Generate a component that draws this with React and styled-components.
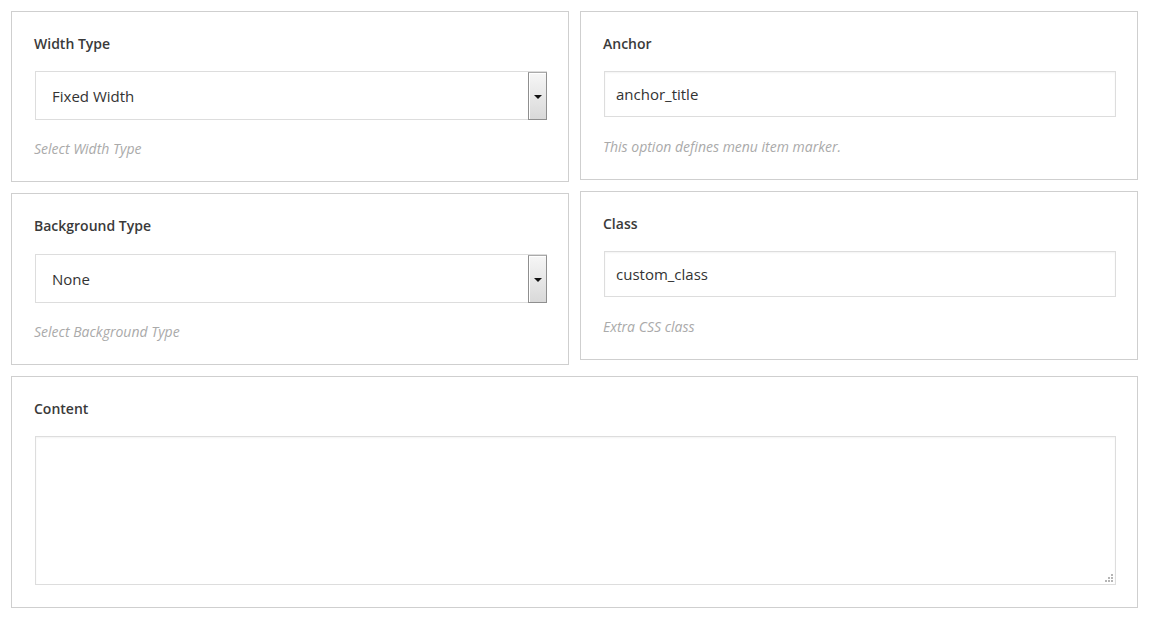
import React from 'react';
import styled, { createGlobalStyle } from 'styled-components';

const GlobalStyle = createGlobalStyle`
  html, body {
    margin: 0;
    padding: 0;
    background: #fff;
    font-family: "Open Sans", "Liberation Sans", sans-serif;
  }
`;

const Page = styled.div`
  padding: 11px 11px 0 11px;
  width: 1127px;
  display: flex;
  flex-direction: column;
  gap: 11px;
`;

const Columns = styled.div`
  display: grid;
  grid-template-columns: 558px 558px;
  gap: 11px;
  align-items: start;
`;

const Column = styled.div`
  display: flex;
  flex-direction: column;
  gap: 11px;
`;

const Box = styled.div`
  border: 1px solid #cfcfcf;
  padding: 22px 21px 22px 23px;
  display: flex;
  flex-direction: column;
`;

const Label = styled.div`
  font-size: 14px;
  line-height: 20px;
  font-weight: 600;
  color: #3a3a3a;
  margin-left: -1px;
  margin-bottom: ${p => p.$space || 17}px;
`;

const Hint = styled.div`
  font-size: 14px;
  line-height: 20px;
  font-style: italic;
  color: #aaa;
  margin-top: ${p => p.$gap}px;
  margin-left: -1px;
`;

const SelectBox = styled.div`
  height: 49px;
  box-sizing: border-box;
  border: 1px solid #ddd;
  display: flex;
  align-items: stretch;
  background: #fff;
`;

const SelectValue = styled.div`
  flex: 1;
  display: flex;
  align-items: center;
  padding-left: 16px;
  font-size: 15px;
  color: #333;
`;

const SelectButton = styled.div`
  width: 19px;
  box-sizing: border-box;
  margin: 0 -1px -1px 0;
  border: 1px solid #8f8f8f;
  border-top-color: #aaa;
  background: linear-gradient(to bottom, #f6f6f6, #d9d9d9);
  box-shadow: inset 1px 1px 0 #fff;
  display: flex;
  align-items: center;
  justify-content: center;

  &::after {
    content: '';
    border-left: 4px solid transparent;
    border-right: 4px solid transparent;
    border-top: 4px solid #111;
    margin-top: 2px;
  }
`;

const TextInput = styled.div`
  height: 46px;
  box-sizing: border-box;
  border: 1px solid #ddd;
  box-shadow: inset 0 1px 2px rgba(0, 0, 0, 0.05);
  display: flex;
  align-items: center;
  padding-left: 11px;
  font-size: 15px;
  color: #333;
`;

const TextArea = styled.div`
  position: relative;
  height: 149px;
  box-sizing: border-box;
  border: 1px solid #ddd;
  box-shadow: inset 0 1px 2px rgba(0, 0, 0, 0.05);
`;

const Grip = styled.svg`
  position: absolute;
  right: 2px;
  bottom: 2px;
`;

const SelectField = ({ label, value, hint, space }) => (
  <Box>
    <Label $space={space}>{label}</Label>
    <SelectBox>
      <SelectValue>{value}</SelectValue>
      <SelectButton />
    </SelectBox>
    <Hint $gap={19}>{hint}</Hint>
  </Box>
);

const InputField = ({ label, value, hint }) => (
  <Box>
    <Label>{label}</Label>
    <TextInput>{value}</TextInput>
    <Hint $gap={20}>{hint}</Hint>
  </Box>
);

export default function App() {
  return (
    <>
      <GlobalStyle />
      <Page>
        <Columns>
          <Column>
            <SelectField label="Width Type" value="Fixed Width" hint="Select Width Type" />
            <SelectField label="Background Type" value="None" hint="Select Background Type" space={18} />
          </Column>
          <Column>
            <InputField label="Anchor" value="anchor_title" hint="This option defines menu item marker." />
            <InputField label="Class" value="custom_class" hint="Extra CSS class" />
          </Column>
        </Columns>
        <Box>
          <Label>Content</Label>
          <TextArea>
            <Grip width="8" height="8" viewBox="0 0 8 8">
              <g fill="#b5b5b5">
                <rect x="6" y="0" width="2" height="2" />
                <rect x="3" y="3" width="2" height="2" />
                <rect x="6" y="3" width="2" height="2" />
                <rect x="0" y="6" width="2" height="2" />
                <rect x="3" y="6" width="2" height="2" />
                <rect x="6" y="6" width="2" height="2" />
              </g>
            </Grip>
          </TextArea>
        </Box>
      </Page>
    </>
  );
}
